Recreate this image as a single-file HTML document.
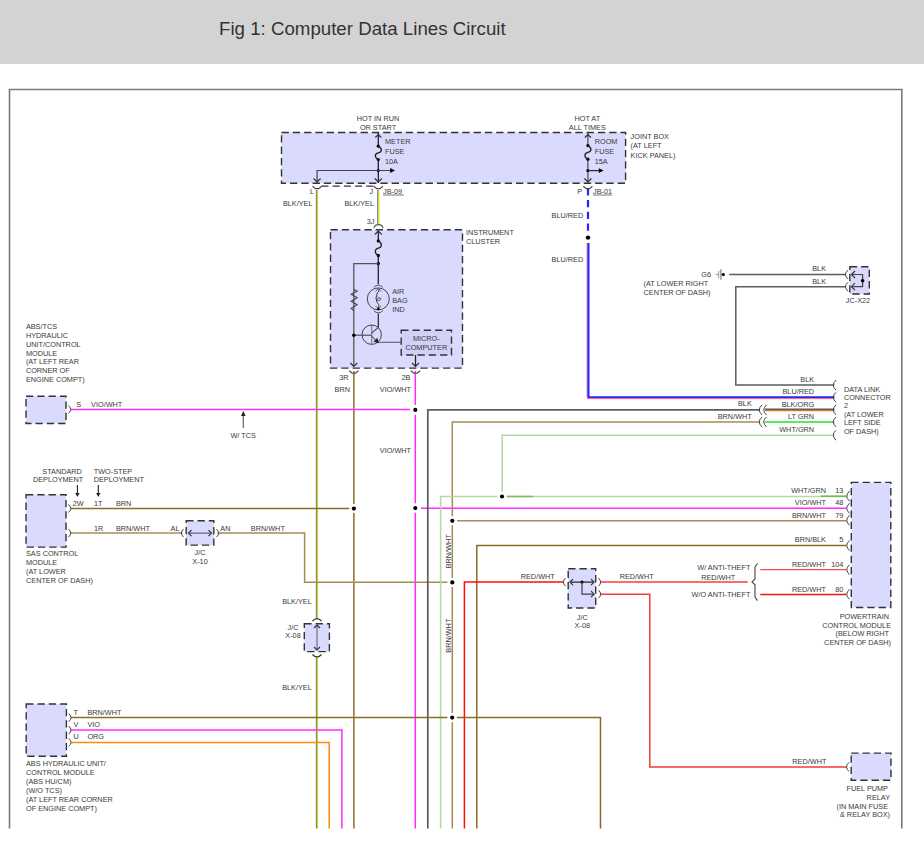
<!DOCTYPE html>
<html><head><meta charset="utf-8"><style>
html,body{margin:0;padding:0;background:#fff;width:924px;height:851px;overflow:hidden}
.hdr{position:absolute;left:0;top:0;width:924px;height:64px;background:#d3d3d3}
.ttl{position:absolute;left:219px;top:17.7px;font-family:"Liberation Sans",sans-serif;font-size:18.7px;color:#333;white-space:nowrap;line-height:22px}
svg{position:absolute;left:0;top:0}
text{font-family:"Liberation Sans",sans-serif}
</style></head><body>
<div class="hdr"></div>
<div class="ttl">Fig 1: Computer Data Lines Circuit</div>
<svg width="924" height="851" viewBox="0 0 924 851">
<path d="M9.5,828.5 L9.5,89.5 L901.8,89.5 L901.8,828.5" fill="none" stroke="#7a7a7a" stroke-width="1.6"/>
<rect x="281.5" y="132.5" width="344.1" height="50.8" fill="#dadaff" stroke="#333" stroke-width="1.4" stroke-dasharray="7.3,4"/>
<rect x="330.5" y="229.8" width="132.0" height="138.3" fill="#dadaff" stroke="#333" stroke-width="1.4" stroke-dasharray="7.3,4"/>
<rect x="401.2" y="330.3" width="50.3" height="24.7" fill="#d0d0f8" stroke="#333" stroke-width="1.4" stroke-dasharray="7.3,4"/>
<rect x="26" y="396.3" width="40.0" height="27.2" fill="#dadaff" stroke="#333" stroke-width="1.4" stroke-dasharray="7.3,4"/>
<rect x="26" y="494.8" width="40.0" height="52.3" fill="#dadaff" stroke="#333" stroke-width="1.4" stroke-dasharray="7.3,4"/>
<rect x="186.2" y="520.8" width="27.6" height="24.3" fill="#dadaff" stroke="#333" stroke-width="1.4" stroke-dasharray="7.3,4"/>
<rect x="304.3" y="623.8" width="25.1" height="27.8" fill="#dadaff" stroke="#333" stroke-width="1.4" stroke-dasharray="7.3,4"/>
<rect x="568.2" y="568.7" width="27.5" height="39.3" fill="#dadaff" stroke="#333" stroke-width="1.4" stroke-dasharray="7.3,4"/>
<rect x="849.8" y="266.7" width="19.5" height="27.3" fill="#dadaff" stroke="#333" stroke-width="1.4" stroke-dasharray="7.3,4"/>
<rect x="851.3" y="482.4" width="39.5" height="125.1" fill="#dadaff" stroke="#333" stroke-width="1.4" stroke-dasharray="7.3,4"/>
<rect x="851.2" y="753.1" width="39.8" height="27.2" fill="#dadaff" stroke="#333" stroke-width="1.4" stroke-dasharray="7.3,4"/>
<rect x="26.2" y="704" width="40.2" height="52.3" fill="#dadaff" stroke="#333" stroke-width="1.4" stroke-dasharray="7.3,4"/>
<path d="M316.4,190 L316.4,619" fill="none" stroke="#767b8a" stroke-width="1.1" stroke-linejoin="miter" />
<path d="M317.5,190 L317.5,619" fill="none" stroke="#d6d612" stroke-width="1.2" stroke-linejoin="miter" />
<path d="M316.4,656 L316.4,828.5" fill="none" stroke="#767b8a" stroke-width="1.1" stroke-linejoin="miter" />
<path d="M317.5,656 L317.5,828.5" fill="none" stroke="#d6d612" stroke-width="1.2" stroke-linejoin="miter" />
<path d="M377.7,190 L377.7,224" fill="none" stroke="#767b8a" stroke-width="1.1" stroke-linejoin="miter" />
<path d="M378.8,190 L378.8,224" fill="none" stroke="#d6d612" stroke-width="1.2" stroke-linejoin="miter" />
<path d="M353.9,371 L353.9,505" fill="none" stroke="#8a6c25" stroke-width="1.5" stroke-linejoin="miter" />
<path d="M353.9,512.5 L353.9,828.5" fill="none" stroke="#8a6c25" stroke-width="1.5" stroke-linejoin="miter" />
<path d="M415.3,371 L415.3,405" fill="none" stroke="#ff2bff" stroke-width="1.5" stroke-linejoin="miter" />
<path d="M415.3,414.5 L415.3,503.5" fill="none" stroke="#ff2bff" stroke-width="1.5" stroke-linejoin="miter" />
<path d="M415.3,512.5 L415.3,828.5" fill="none" stroke="#ff2bff" stroke-width="1.5" stroke-linejoin="miter" />
<path d="M70.7,409.6 L410,409.6" fill="none" stroke="#ff2bff" stroke-width="1.5" stroke-linejoin="miter" />
<path d="M421,508.3 L846.5,508.3" fill="none" stroke="#ff2bff" stroke-width="1.5" stroke-linejoin="miter" />
<path d="M70.8,508.5 L349.5,508.5" fill="none" stroke="#8a6c25" stroke-width="1.5" stroke-linejoin="miter" />
<path d="M70.8,533.1 L182.5,533.1" fill="none" stroke="#a58c55" stroke-width="1.5" stroke-linejoin="miter" />
<path d="M217.5,533.1 L304.6,533.1 L304.6,582.3 L447.5,582.3" fill="none" stroke="#a58c55" stroke-width="1.5" stroke-linejoin="miter" />
<path d="M427.8,828.5 L427.8,409.9 L760,409.9" fill="none" stroke="#5c5c5c" stroke-width="1.7" stroke-linejoin="miter" />
<path d="M765,409.2 L834.4,409.2" fill="none" stroke="#5c5c5c" stroke-width="1.4" stroke-linejoin="miter" />
<path d="M765,410.6 L834.4,410.6" fill="none" stroke="#e07a1a" stroke-width="1.4" stroke-linejoin="miter" />
<path d="M452.3,828.5 L452.3,722" fill="none" stroke="#a58c55" stroke-width="1.5" stroke-linejoin="miter" />
<path d="M452.3,713 L452.3,587" fill="none" stroke="#a58c55" stroke-width="1.5" stroke-linejoin="miter" />
<path d="M452.3,578 L452.3,525" fill="none" stroke="#a58c55" stroke-width="1.5" stroke-linejoin="miter" />
<path d="M452.3,516.5 L452.3,421.9 L760,421.9" fill="none" stroke="#a58c55" stroke-width="1.5" stroke-linejoin="miter" />
<path d="M765,421.9 L834.4,421.9" fill="none" stroke="#22e622" stroke-width="1.5" stroke-linejoin="miter" />
<path d="M502.2,492 L502.2,435.2 L834.4,435.2" fill="none" stroke="#b4d8a6" stroke-width="1.5" stroke-linejoin="miter" />
<path d="M440.6,828.5 L440.6,496.5 L497.5,496.5" fill="none" stroke="#b4d8a6" stroke-width="1.6" stroke-linejoin="miter" />
<path d="M506.5,496.5 L846.5,496.5" fill="none" stroke="#b4d8a6" stroke-width="1.6" stroke-linejoin="miter" />
<path d="M507,496.5 L533,496.5" fill="none" stroke="#7cc060" stroke-width="1.6" stroke-linejoin="miter" />
<path d="M821,496.2 L846.5,496.2" fill="none" stroke="#6cb850" stroke-width="1.5" stroke-linejoin="miter" />
<path d="M457,520.8 L846.5,520.8" fill="none" stroke="#a58c55" stroke-width="1.5" stroke-linejoin="miter" />
<path d="M476.8,828.5 L476.8,545.5 L846.5,545.5" fill="none" stroke="#8a6c25" stroke-width="1.5" stroke-linejoin="miter" />
<path d="M464.4,828.5 L464.4,582.1 L563.5,582.1" fill="none" stroke="#ff0c0c" stroke-width="1.5" stroke-linejoin="miter" />
<path d="M600.7,582.1 L747.8,581.9" fill="none" stroke="#ff3a3a" stroke-width="1.5" stroke-linejoin="miter" />
<path d="M600.7,594.2 L649.8,594.2 L649.8,766.9 L846.2,766.9" fill="none" stroke="#f03c3c" stroke-width="1.5" stroke-linejoin="miter" />
<path d="M760.3,569.6 L846.5,569.6" fill="none" stroke="#ff4a4a" stroke-width="1.4" stroke-linejoin="miter" />
<path d="M760.3,594.4 L846.5,594.4" fill="none" stroke="#ee1515" stroke-width="1.5" stroke-linejoin="miter" />
<path d="M71,717.6 L447.5,717.6" fill="none" stroke="#8a6c25" stroke-width="1.5" stroke-linejoin="miter" />
<path d="M456.5,717.6 L600.5,717.6 L600.5,828.5" fill="none" stroke="#8a6c25" stroke-width="1.5" stroke-linejoin="miter" />
<path d="M71,730 L341.9,730 L341.9,828.5" fill="none" stroke="#ff2bff" stroke-width="1.5" stroke-linejoin="miter" />
<path d="M71,742.4 L329.2,742.4 L329.2,828.5" fill="none" stroke="#ff8a10" stroke-width="1.5" stroke-linejoin="miter" />
<path d="M588,188.3 L588,232" fill="none" stroke="#2525ff" stroke-width="2.2" stroke-linejoin="miter" stroke-dasharray="7.3,4.4"/>
<path d="M587.2,243 L587.2,397.3" fill="none" stroke="#d04a90" stroke-width="1.0" stroke-linejoin="miter" />
<path d="M588.5,243 L588.5,397.3 L834.4,397.3" fill="none" stroke="#2525ff" stroke-width="2" stroke-linejoin="miter" />
<path d="M587,398.6 L834.4,398.6" fill="none" stroke="#ff6060" stroke-width="0.9" stroke-linejoin="miter" />
<path d="M729.2,274.5 L846,274.5" fill="none" stroke="#5c5c5c" stroke-width="1.5" stroke-linejoin="miter" />
<path d="M846,286.7 L735.8,286.7 L735.8,385.1 L834.4,385.1" fill="none" stroke="#5c5c5c" stroke-width="1.5" stroke-linejoin="miter" />
<circle cx="415.3" cy="409.9" r="4.5" fill="#fff"/>
<circle cx="415.3" cy="409.9" r="2.1" fill="#000"/>
<circle cx="353.9" cy="508.6" r="4.5" fill="#fff"/>
<circle cx="353.9" cy="508.6" r="2.1" fill="#000"/>
<circle cx="415.3" cy="508.1" r="4.5" fill="#fff"/>
<circle cx="415.3" cy="508.1" r="2.1" fill="#000"/>
<circle cx="502" cy="496.5" r="4.5" fill="#fff"/>
<circle cx="502" cy="496.5" r="2.1" fill="#000"/>
<circle cx="452.3" cy="520.8" r="4.5" fill="#fff"/>
<circle cx="452.3" cy="520.8" r="2.1" fill="#000"/>
<circle cx="452.3" cy="582.4" r="4.5" fill="#fff"/>
<circle cx="452.3" cy="582.4" r="2.1" fill="#000"/>
<circle cx="452.2" cy="717.6" r="4.5" fill="#fff"/>
<circle cx="452.2" cy="717.6" r="2.1" fill="#000"/>
<circle cx="588" cy="237.6" r="2.2" fill="#000"/>
<path d="M378.3,133 L378.3,146.2" fill="none" stroke="#222" stroke-width="1.3" stroke-linejoin="miter" />
<path d="M378.3,159.5 L378.3,183" fill="none" stroke="#222" stroke-width="1.3" stroke-linejoin="miter" />
<path d="M375.3,137.5 L378.3,134.5 L381.3,137.5" fill="none" stroke="#333" stroke-width="1.2"/>
<circle cx="378.3" cy="146.2" r="1.6" fill="#000"/>
<circle cx="378.3" cy="159.5" r="1.6" fill="#000"/>
<path d="M378.3,146.2 C382.3,148.2 382.3,151.85 378.3,152.85 C374.3,153.85 374.3,157.5 378.3,159.5" fill="none" stroke="#222" stroke-width="1.3"/>
<circle cx="378.3" cy="170.5" r="1.6" fill="#000"/>
<path d="M317.1,183 L317.1,170.5 L391,170.5" fill="none" stroke="#444" stroke-width="1.2" stroke-linejoin="miter" />
<path d="M390.2,168.1 L395,170.5 L390.2,172.9 Z" fill="#000"/>
<path d="M313.6,178.5 L317.1,182 L320.6,178.5" fill="none" stroke="#333" stroke-width="1.2"/>
<path d="M374.8,178.5 L378.3,182 L381.8,178.5" fill="none" stroke="#333" stroke-width="1.2"/>
<path d="M312.5,186.2 L315.5,188.6 L318.70000000000005,188.6 L321.70000000000005,186.2" fill="none" stroke="#444" stroke-width="1.1"/>
<path d="M373.7,186.2 L376.7,188.6 L379.90000000000003,188.6 L382.90000000000003,186.2" fill="none" stroke="#444" stroke-width="1.1"/>
<path d="M321.5,186.2 L374,186.2" fill="none" stroke="#333" stroke-width="1.2" stroke-linejoin="miter" stroke-dasharray="7,4.2"/>
<path d="M587.9,133 L587.9,145.6" fill="none" stroke="#555" stroke-width="1.3" stroke-linejoin="miter" />
<path d="M587.9,159.2 L587.9,183" fill="none" stroke="#555" stroke-width="1.3" stroke-linejoin="miter" />
<path d="M584.9,137.5 L587.9,134.5 L590.9,137.5" fill="none" stroke="#333" stroke-width="1.2"/>
<circle cx="587.9" cy="145.6" r="1.6" fill="#000"/>
<circle cx="587.9" cy="159.2" r="1.6" fill="#000"/>
<path d="M587.9,145.6 C591.9,147.6 591.9,151.39999999999998 587.9,152.39999999999998 C583.9,153.39999999999998 583.9,157.2 587.9,159.2" fill="none" stroke="#222" stroke-width="1.3"/>
<circle cx="587.9" cy="170.6" r="1.6" fill="#000"/>
<path d="M587.9,170.6 L600,170.6" fill="none" stroke="#333" stroke-width="1.3" stroke-linejoin="miter" />
<path d="M598.8000000000001,168.2 L603.6,170.6 L598.8000000000001,173.0 Z" fill="#000"/>
<path d="M584.4,178.5 L587.9,182 L591.4,178.5" fill="none" stroke="#333" stroke-width="1.2"/>
<path d="M583.3,186.2 L586.3,188.6 L589.5,188.6 L592.5,186.2" fill="none" stroke="#444" stroke-width="1.1"/>
<path d="M374,228.3 Q374.5,224.6 378.5,224.6 Q382.5,224.6 383,228.3" fill="none" stroke="#555" stroke-width="1.1"/>
<path d="M374.8,234.5 L378.3,231 L381.8,234.5" fill="none" stroke="#333" stroke-width="1.2"/>
<path d="M378.3,231 L378.3,240.9" fill="none" stroke="#222" stroke-width="1.3" stroke-linejoin="miter" />
<path d="M378.3,255.4 L378.3,263.6" fill="none" stroke="#222" stroke-width="1.3" stroke-linejoin="miter" />
<circle cx="378.3" cy="240.9" r="1.6" fill="#000"/>
<circle cx="378.3" cy="255.4" r="1.6" fill="#000"/>
<path d="M378.3,240.9 C382.3,242.9 382.3,247.15 378.3,248.15 C374.3,249.15 374.3,253.4 378.3,255.4" fill="none" stroke="#222" stroke-width="1.3"/>
<circle cx="378.3" cy="263.6" r="1.7" fill="#000"/>
<path d="M378.3,263.6 L353.8,263.6 L353.8,366" fill="none" stroke="#555" stroke-width="1.3" stroke-linejoin="miter" />
<path d="M353.9,289.5 L357.2,291.3 L351.2,294.3 L357.2,297.8 L351.2,301.2 L357.2,304.8 L351.2,308.3 L353.9,310.9" fill="none" stroke="#444" stroke-width="1.1"/>
<path d="M378.3,263.6 L378.3,284.3" fill="none" stroke="#222" stroke-width="1.3" stroke-linejoin="miter" />
<path d="M373.8,287.3 Q378.3,283 382.8,287.3" fill="none" stroke="#555" stroke-width="1"/>
<circle cx="378.3" cy="298.9" r="11" fill="none" stroke="#444" stroke-width="1"/>
<path d="M375.5,291.40000000000003 L378.3,288.6 L381.1,291.40000000000003" fill="none" stroke="#555" stroke-width="0.9"/>
<path d="M375.5,305.8 L378.3,308.6 L381.1,305.8" fill="none" stroke="#555" stroke-width="0.9"/>
<path d="M378.3,288.6 C381,291 375.5,293 377,296 C374,299 378,302 380.5,299.5 C382,297.5 377,297 376.5,299.8 C376,303 380.5,304 378.3,308.6" fill="none" stroke="#333" stroke-width="1"/>
<circle cx="378.3" cy="309" r="1.3" fill="#000"/>
<path d="M373.8,310.8 Q378.3,315 382.8,310.8" fill="none" stroke="#555" stroke-width="1"/>
<path d="M378.3,313.5 L378.3,327.6" fill="none" stroke="#222" stroke-width="1.2" stroke-linejoin="miter" />
<circle cx="371.7" cy="334.7" r="9.7" fill="none" stroke="#444" stroke-width="1"/>
<path d="M353.8,335.2 L371.7,335.2" fill="none" stroke="#444" stroke-width="1.1" stroke-linejoin="miter" />
<path d="M371.7,324.5 L371.7,344.6" fill="none" stroke="#777" stroke-width="1.1" stroke-linejoin="miter" />
<path d="M371.7,333.2 L378.3,327.4" fill="none" stroke="#444" stroke-width="1.1" stroke-linejoin="miter" />
<path d="M371.7,336 L377.5,342.3 L401.2,342.3" fill="none" stroke="#555" stroke-width="1.1" stroke-linejoin="miter" />
<path d="M379,343.2 L373.6,341.8 L377.2,337.8 Z" fill="#222"/>
<circle cx="353.8" cy="335.2" r="1.7" fill="#000"/>
<path d="M350.3,363.0 L353.8,366.5 L357.3,363.0" fill="none" stroke="#333" stroke-width="1.2"/>
<path d="M349.2,370.8 L352.2,373.2 L355.40000000000003,373.2 L358.40000000000003,370.8" fill="none" stroke="#444" stroke-width="1.1"/>
<path d="M415.5,355 L415.5,366" fill="none" stroke="#222" stroke-width="1.3" stroke-linejoin="miter" />
<path d="M412.0,363.0 L415.5,366.5 L419.0,363.0" fill="none" stroke="#333" stroke-width="1.2"/>
<path d="M410.9,370.8 L413.9,373.2 L417.1,373.2 L420.1,370.8" fill="none" stroke="#444" stroke-width="1.1"/>
<path d="M68.5,405.5 Q72.9,409.5 68.5,413.5" fill="none" stroke="#444" stroke-width="1.0"/>
<path d="M68.5,504.5 Q72.9,508.5 68.5,512.5" fill="none" stroke="#444" stroke-width="1.0"/>
<path d="M68.5,529.1 Q72.9,533.1 68.5,537.1" fill="none" stroke="#444" stroke-width="1.0"/>
<path d="M68.8,713.6 Q73.2,717.6 68.8,721.6" fill="none" stroke="#444" stroke-width="1.0"/>
<path d="M68.8,726 Q73.2,730 68.8,734" fill="none" stroke="#444" stroke-width="1.0"/>
<path d="M68.8,738.4 Q73.2,742.4 68.8,746.4" fill="none" stroke="#444" stroke-width="1.0"/>
<path d="M183.5,529.1 Q179.1,533.1 183.5,537.1" fill="none" stroke="#444" stroke-width="1.0"/>
<path d="M216.5,529.1 Q220.9,533.1 216.5,537.1" fill="none" stroke="#444" stroke-width="1.0"/>
<path d="M191.5,530.1 L188.5,533.1 L191.5,536.1" fill="none" stroke="#333" stroke-width="1.2"/>
<path d="M208.5,530.1 L211.5,533.1 L208.5,536.1" fill="none" stroke="#333" stroke-width="1.2"/>
<path d="M188.5,533.1 L211.5,533.1" fill="none" stroke="#555" stroke-width="1.1" stroke-linejoin="miter" />
<path d="M312.5,621 Q317,616.05 321.5,621" fill="none" stroke="#333" stroke-width="1.2"/>
<path d="M312.5,654.5 Q317,659.45 321.5,654.5" fill="none" stroke="#333" stroke-width="1.2"/>
<path d="M317,625 L317,650" fill="none" stroke="#666" stroke-width="1.1" stroke-linejoin="miter" />
<path d="M314,628 L317,625 L320,628" fill="none" stroke="#333" stroke-width="1.2"/>
<path d="M314,647 L317,650 L320,647" fill="none" stroke="#333" stroke-width="1.2"/>
<path d="M565.5,578.1 Q561.1,582.1 565.5,586.1" fill="none" stroke="#444" stroke-width="1.0"/>
<path d="M598.5,578.1 Q602.9,582.1 598.5,586.1" fill="none" stroke="#444" stroke-width="1.0"/>
<path d="M598.5,590.2 Q602.9,594.2 598.5,598.2" fill="none" stroke="#444" stroke-width="1.0"/>
<path d="M570,582.1 L594,582.1" fill="none" stroke="#222" stroke-width="1.2" stroke-linejoin="miter" />
<path d="M573,579.1 L570,582.1 L573,585.1" fill="none" stroke="#333" stroke-width="1.2"/>
<path d="M591,579.1 L594,582.1 L591,585.1" fill="none" stroke="#333" stroke-width="1.2"/>
<circle cx="582" cy="582.1" r="1.6" fill="#000"/>
<path d="M582,582.1 L582,594.2 L594,594.2" fill="none" stroke="#444" stroke-width="1.2" stroke-linejoin="miter" />
<path d="M591,591.2 L594,594.2 L591,597.2" fill="none" stroke="#333" stroke-width="1.2"/>
<path d="M848,270.0 Q843.05,274.5 848,279.0" fill="none" stroke="#444" stroke-width="1.0"/>
<path d="M848,282.2 Q843.05,286.7 848,291.2" fill="none" stroke="#444" stroke-width="1.0"/>
<path d="M855.0,271.0 L851.5,274.5 L855.0,278.0" fill="none" stroke="#333" stroke-width="1.2"/>
<path d="M855.0,283.2 L851.5,286.7 L855.0,290.2" fill="none" stroke="#333" stroke-width="1.2"/>
<path d="M851.5,274.5 L862.6,274.5 L862.6,286.7 L851.5,286.7" fill="none" stroke="#444" stroke-width="1.2" stroke-linejoin="miter" />
<circle cx="862.6" cy="280.8" r="1.8" fill="#000"/>
<path d="M715.5,274.5 L719,274.5" fill="none" stroke="#999" stroke-width="1.0" stroke-linejoin="miter" />
<path d="M718.6,271 L718.6,278" fill="none" stroke="#aaa" stroke-width="1.3" stroke-linejoin="miter" />
<path d="M720.9,269.2 L720.9,279.8" fill="none" stroke="#999" stroke-width="1.5" stroke-linejoin="miter" />
<circle cx="723.3" cy="274.5" r="1.6" fill="#000"/>
<path d="M836,380.1 Q830.5,385.1 836,390.1" fill="none" stroke="#444" stroke-width="1.0"/>
<path d="M836,392.3 Q830.5,397.3 836,402.3" fill="none" stroke="#444" stroke-width="1.0"/>
<path d="M836,404.9 Q830.5,409.9 836,414.9" fill="none" stroke="#444" stroke-width="1.0"/>
<path d="M836,416.9 Q830.5,421.9 836,426.9" fill="none" stroke="#444" stroke-width="1.0"/>
<path d="M836,430.2 Q830.5,435.2 836,440.2" fill="none" stroke="#444" stroke-width="1.0"/>
<path d="M762,404.9 Q756.5,409.9 762,414.9" fill="none" stroke="#444" stroke-width="1.0"/>
<path d="M766.5,404.9 Q761.0,409.9 766.5,414.9" fill="none" stroke="#444" stroke-width="1.0"/>
<path d="M762,416.9 Q756.5,421.9 762,426.9" fill="none" stroke="#444" stroke-width="1.0"/>
<path d="M766.5,416.9 Q761.0,421.9 766.5,426.9" fill="none" stroke="#444" stroke-width="1.0"/>
<path d="M849.5,491.1 Q844.0,496.1 849.5,501.1" fill="none" stroke="#444" stroke-width="1.0"/>
<path d="M849.5,503.3 Q844.0,508.3 849.5,513.3" fill="none" stroke="#444" stroke-width="1.0"/>
<path d="M849.5,515.3 Q844.0,520.3 849.5,525.3" fill="none" stroke="#444" stroke-width="1.0"/>
<path d="M849.5,540.5 Q844.0,545.5 849.5,550.5" fill="none" stroke="#444" stroke-width="1.0"/>
<path d="M849.5,564.7 Q844.0,569.7 849.5,574.7" fill="none" stroke="#444" stroke-width="1.0"/>
<path d="M849.5,589.3 Q844.0,594.3 849.5,599.3" fill="none" stroke="#444" stroke-width="1.0"/>
<path d="M849,762.4 Q844.05,766.9 849,771.4" fill="none" stroke="#444" stroke-width="1.0"/>
<path d="M757.5,563.5 L755,567 L755,579 L752,581.9 L755,584.8 L755,597 L757.5,600.6" fill="none" stroke="#444" stroke-width="1.1"/>
<path d="M243.3,428 L243.3,414" fill="none" stroke="#555" stroke-width="1.1" stroke-linejoin="miter" />
<path d="M241,416 L243.3,411 L245.6,416 Z" fill="#222"/>
<path d="M77.4,485 L77.4,494" fill="none" stroke="#222" stroke-width="1.1" stroke-linejoin="miter" />
<path d="M75.2,493 L77.4,497 L79.6,493 Z" fill="#222"/>
<path d="M98.3,485 L98.3,494" fill="none" stroke="#222" stroke-width="1.1" stroke-linejoin="miter" />
<path d="M96.1,493 L98.3,497 L100.5,493 Z" fill="#222"/>
<text x="378" y="121.0" text-anchor="middle" font-size="7.3" fill="#3a3a3a">HOT IN RUN</text>
<text x="378" y="129.7" text-anchor="middle" font-size="7.3" fill="#3a3a3a">OR START</text>
<text x="385" y="144.0" text-anchor="start" font-size="7.3" fill="#3a3a3a">METER</text>
<text x="385" y="153.9" text-anchor="start" font-size="7.3" fill="#3a3a3a">FUSE</text>
<text x="385" y="163.8" text-anchor="start" font-size="7.3" fill="#3a3a3a">10A</text>
<text x="587.3" y="121.0" text-anchor="middle" font-size="7.3" fill="#3a3a3a">HOT AT</text>
<text x="587.3" y="129.7" text-anchor="middle" font-size="7.3" fill="#3a3a3a">ALL TIMES</text>
<text x="594.7" y="144.2" text-anchor="start" font-size="7.3" fill="#3a3a3a">ROOM</text>
<text x="594.7" y="154.2" text-anchor="start" font-size="7.3" fill="#3a3a3a">FUSE</text>
<text x="594.7" y="164.2" text-anchor="start" font-size="7.3" fill="#3a3a3a">15A</text>
<text x="630.6" y="138.8" text-anchor="start" font-size="7.3" fill="#3a3a3a">JOINT BOX</text>
<text x="630.6" y="148.4" text-anchor="start" font-size="7.3" fill="#3a3a3a">(AT LEFT</text>
<text x="630.6" y="158.0" text-anchor="start" font-size="7.3" fill="#3a3a3a">KICK PANEL)</text>
<text x="314" y="193.5" text-anchor="end" font-size="7.3" fill="#3a3a3a">L</text>
<text x="373.2" y="193.5" text-anchor="end" font-size="7.3" fill="#3a3a3a">J</text>
<text x="383" y="193.5" text-anchor="start" font-size="7.3" fill="#3a3a3a">JB-09</text>
<path d="M383,195 L404,195" fill="none" stroke="#555" stroke-width="0.8" stroke-linejoin="miter" />
<text x="582" y="193.5" text-anchor="end" font-size="7.3" fill="#3a3a3a">P</text>
<text x="593" y="193.5" text-anchor="start" font-size="7.3" fill="#3a3a3a">JB-01</text>
<path d="M593,195 L612,195" fill="none" stroke="#555" stroke-width="0.8" stroke-linejoin="miter" />
<text x="312.5" y="206.2" text-anchor="end" font-size="7.3" fill="#3a3a3a">BLK/YEL</text>
<text x="374" y="206.2" text-anchor="end" font-size="7.3" fill="#3a3a3a">BLK/YEL</text>
<text x="374.5" y="223.6" text-anchor="end" font-size="7.3" fill="#3a3a3a">3J</text>
<text x="466" y="235.0" text-anchor="start" font-size="7.3" fill="#3a3a3a">INSTRUMENT</text>
<text x="466" y="244.2" text-anchor="start" font-size="7.3" fill="#3a3a3a">CLUSTER</text>
<text x="392.2" y="293.8" text-anchor="start" font-size="7.3" fill="#3a3a3a">AIR</text>
<text x="392.2" y="302.8" text-anchor="start" font-size="7.3" fill="#3a3a3a">BAG</text>
<text x="392.2" y="311.8" text-anchor="start" font-size="7.3" fill="#3a3a3a">IND</text>
<text x="426.3" y="340.9" text-anchor="middle" font-size="7.3" fill="#3a3a3a">MICRO-</text>
<text x="426.3" y="349.8" text-anchor="middle" font-size="7.3" fill="#3a3a3a">COMPUTER</text>
<text x="348.5" y="380.3" text-anchor="end" font-size="7.3" fill="#3a3a3a">3R</text>
<text x="410.5" y="380.3" text-anchor="end" font-size="7.3" fill="#3a3a3a">2B</text>
<text x="350" y="391.5" text-anchor="end" font-size="7.3" fill="#3a3a3a">BRN</text>
<text x="411" y="391.5" text-anchor="end" font-size="7.3" fill="#3a3a3a">VIO/WHT</text>
<text x="411" y="452.5" text-anchor="end" font-size="7.3" fill="#3a3a3a">VIO/WHT</text>
<text x="583.2" y="218.2" text-anchor="end" font-size="7.3" fill="#3a3a3a">BLU/RED</text>
<text x="583.2" y="261.6" text-anchor="end" font-size="7.3" fill="#3a3a3a">BLU/RED</text>
<text x="25.9" y="328.8" text-anchor="start" font-size="7.3" fill="#3a3a3a">ABS/TCS</text>
<text x="25.9" y="337.7" text-anchor="start" font-size="7.3" fill="#3a3a3a">HYDRAULIC</text>
<text x="25.9" y="346.6" text-anchor="start" font-size="7.3" fill="#3a3a3a">UNIT/CONTROL</text>
<text x="25.9" y="355.5" text-anchor="start" font-size="7.3" fill="#3a3a3a">MODULE</text>
<text x="25.9" y="364.4" text-anchor="start" font-size="7.3" fill="#3a3a3a">(AT LEFT REAR</text>
<text x="25.9" y="373.3" text-anchor="start" font-size="7.3" fill="#3a3a3a">CORNER OF</text>
<text x="25.9" y="382.2" text-anchor="start" font-size="7.3" fill="#3a3a3a">ENGINE COMPT)</text>
<text x="76.3" y="407.3" text-anchor="start" font-size="7.3" fill="#3a3a3a">S</text>
<text x="91.1" y="407.3" text-anchor="start" font-size="7.3" fill="#3a3a3a">VIO/WHT</text>
<text x="243.2" y="437.9" text-anchor="middle" font-size="7.3" fill="#3a3a3a">W/ TCS</text>
<text x="42.3" y="473.8" text-anchor="start" font-size="7.3" fill="#3a3a3a">STANDARD</text>
<text x="32.9" y="481.9" text-anchor="start" font-size="7.3" fill="#3a3a3a">DEPLOYMENT</text>
<text x="93.7" y="473.8" text-anchor="start" font-size="7.3" fill="#3a3a3a">TWO-STEP</text>
<text x="93.7" y="481.9" text-anchor="start" font-size="7.3" fill="#3a3a3a">DEPLOYMENT</text>
<text x="72.8" y="505.9" text-anchor="start" font-size="7.3" fill="#3a3a3a">2W</text>
<text x="94" y="505.9" text-anchor="start" font-size="7.3" fill="#3a3a3a">1T</text>
<text x="115.9" y="505.9" text-anchor="start" font-size="7.3" fill="#3a3a3a">BRN</text>
<text x="94" y="531" text-anchor="start" font-size="7.3" fill="#3a3a3a">1R</text>
<text x="115.9" y="531" text-anchor="start" font-size="7.3" fill="#3a3a3a">BRN/WHT</text>
<text x="26" y="555.8" text-anchor="start" font-size="7.3" fill="#3a3a3a">SAS CONTROL</text>
<text x="26" y="564.7" text-anchor="start" font-size="7.3" fill="#3a3a3a">MODULE</text>
<text x="26" y="573.6" text-anchor="start" font-size="7.3" fill="#3a3a3a">(AT LOWER</text>
<text x="26" y="582.5" text-anchor="start" font-size="7.3" fill="#3a3a3a">CENTER OF DASH)</text>
<text x="179.5" y="531.2" text-anchor="end" font-size="7.3" fill="#3a3a3a">AL</text>
<text x="220.3" y="531.2" text-anchor="start" font-size="7.3" fill="#3a3a3a">AN</text>
<text x="250.8" y="531.2" text-anchor="start" font-size="7.3" fill="#3a3a3a">BRN/WHT</text>
<text x="200" y="554.8" text-anchor="middle" font-size="7.3" fill="#3a3a3a">J/C</text>
<text x="200" y="563.5" text-anchor="middle" font-size="7.3" fill="#3a3a3a">X-10</text>
<text x="311.8" y="603.6" text-anchor="end" font-size="7.3" fill="#3a3a3a">BLK/YEL</text>
<text x="293" y="629.5" text-anchor="middle" font-size="7.3" fill="#3a3a3a">J/C</text>
<text x="293" y="638.4" text-anchor="middle" font-size="7.3" fill="#3a3a3a">X-08</text>
<text x="311.8" y="690" text-anchor="end" font-size="7.3" fill="#3a3a3a">BLK/YEL</text>
<text x="73.4" y="714.7" text-anchor="start" font-size="7.3" fill="#3a3a3a">T</text>
<text x="73.4" y="726.5" text-anchor="start" font-size="7.3" fill="#3a3a3a">V</text>
<text x="73.4" y="738.6" text-anchor="start" font-size="7.3" fill="#3a3a3a">U</text>
<text x="87.4" y="714.7" text-anchor="start" font-size="7.3" fill="#3a3a3a">BRN/WHT</text>
<text x="87.4" y="727" text-anchor="start" font-size="7.3" fill="#3a3a3a">VIO</text>
<text x="87.4" y="739.4" text-anchor="start" font-size="7.3" fill="#3a3a3a">ORG</text>
<text x="26" y="765.7" text-anchor="start" font-size="7.3" fill="#3a3a3a">ABS HYDRAULIC UNIT/</text>
<text x="26" y="774.8" text-anchor="start" font-size="7.3" fill="#3a3a3a">CONTROL MODULE</text>
<text x="26" y="783.8" text-anchor="start" font-size="7.3" fill="#3a3a3a">(ABS HU/CM)</text>
<text x="26" y="792.9" text-anchor="start" font-size="7.3" fill="#3a3a3a">(W/O TCS)</text>
<text x="26" y="801.9" text-anchor="start" font-size="7.3" fill="#3a3a3a">(AT LEFT REAR CORNER</text>
<text x="26" y="811.0" text-anchor="start" font-size="7.3" fill="#3a3a3a">OF ENGINE COMPT)</text>
<text x="554.8" y="579.3" text-anchor="end" font-size="7.3" fill="#3a3a3a">RED/WHT</text>
<text x="619.7" y="579.3" text-anchor="start" font-size="7.3" fill="#3a3a3a">RED/WHT</text>
<text x="582.3" y="619.5" text-anchor="middle" font-size="7.3" fill="#3a3a3a">J/C</text>
<text x="582.3" y="627.7" text-anchor="middle" font-size="7.3" fill="#3a3a3a">X-08</text>
<text x="750.4" y="569.9" text-anchor="end" font-size="7.3" fill="#3a3a3a">W/ ANTI-THEFT</text>
<text x="735.2" y="579.6" text-anchor="end" font-size="7.3" fill="#3a3a3a">RED/WHT</text>
<text x="750.4" y="596.8" text-anchor="end" font-size="7.3" fill="#3a3a3a">W/O ANTI-THEFT</text>
<text x="826" y="492.5" text-anchor="end" font-size="7.3" fill="#3a3a3a">WHT/GRN</text>
<text x="843.4" y="492.5" text-anchor="end" font-size="7.3" fill="#3a3a3a">13</text>
<text x="826" y="504.8" text-anchor="end" font-size="7.3" fill="#3a3a3a">VIO/WHT</text>
<text x="843.4" y="504.8" text-anchor="end" font-size="7.3" fill="#3a3a3a">48</text>
<text x="826" y="517.8" text-anchor="end" font-size="7.3" fill="#3a3a3a">BRN/WHT</text>
<text x="843.4" y="517.8" text-anchor="end" font-size="7.3" fill="#3a3a3a">79</text>
<text x="826" y="542" text-anchor="end" font-size="7.3" fill="#3a3a3a">BRN/BLK</text>
<text x="843.4" y="542" text-anchor="end" font-size="7.3" fill="#3a3a3a">5</text>
<text x="826" y="567" text-anchor="end" font-size="7.3" fill="#3a3a3a">RED/WHT</text>
<text x="843.4" y="567" text-anchor="end" font-size="7.3" fill="#3a3a3a">104</text>
<text x="826" y="591.8" text-anchor="end" font-size="7.3" fill="#3a3a3a">RED/WHT</text>
<text x="843.4" y="591.8" text-anchor="end" font-size="7.3" fill="#3a3a3a">80</text>
<text x="889" y="619.1" text-anchor="end" font-size="7.3" fill="#3a3a3a">POWERTRAIN</text>
<text x="891" y="627.9" text-anchor="end" font-size="7.3" fill="#3a3a3a">CONTROL MODULE</text>
<text x="889" y="636" text-anchor="end" font-size="7.3" fill="#3a3a3a">(BELOW RIGHT</text>
<text x="891" y="644.7" text-anchor="end" font-size="7.3" fill="#3a3a3a">CENTER OF DASH)</text>
<text x="814.1" y="381.6" text-anchor="end" font-size="7.3" fill="#3a3a3a">BLK</text>
<text x="814.1" y="394" text-anchor="end" font-size="7.3" fill="#3a3a3a">BLU/RED</text>
<text x="814.1" y="406.5" text-anchor="end" font-size="7.3" fill="#3a3a3a">BLK/ORG</text>
<text x="814.1" y="418.6" text-anchor="end" font-size="7.3" fill="#3a3a3a">LT GRN</text>
<text x="814.1" y="431.8" text-anchor="end" font-size="7.3" fill="#3a3a3a">WHT/GRN</text>
<text x="751.8" y="406.4" text-anchor="end" font-size="7.3" fill="#3a3a3a">BLK</text>
<text x="751.8" y="418.5" text-anchor="end" font-size="7.3" fill="#3a3a3a">BRN/WHT</text>
<text x="843.9" y="391.6" text-anchor="start" font-size="7.3" fill="#3a3a3a">DATA LINK</text>
<text x="843.9" y="399.8" text-anchor="start" font-size="7.3" fill="#3a3a3a">CONNECTOR</text>
<text x="843.9" y="407.7" text-anchor="start" font-size="7.3" fill="#3a3a3a">2</text>
<text x="843.9" y="416.9" text-anchor="start" font-size="7.3" fill="#3a3a3a">(AT LOWER</text>
<text x="843.9" y="425.4" text-anchor="start" font-size="7.3" fill="#3a3a3a">LEFT SIDE</text>
<text x="843.9" y="434" text-anchor="start" font-size="7.3" fill="#3a3a3a">OF DASH)</text>
<text x="711.1" y="276.6" text-anchor="end" font-size="7.3" fill="#3a3a3a">G6</text>
<text x="643.6" y="286.0" text-anchor="start" font-size="7.3" fill="#3a3a3a">(AT LOWER RIGHT</text>
<text x="643.6" y="294.9" text-anchor="start" font-size="7.3" fill="#3a3a3a">CENTER OF DASH)</text>
<text x="826" y="270.7" text-anchor="end" font-size="7.3" fill="#3a3a3a">BLK</text>
<text x="826" y="283.7" text-anchor="end" font-size="7.3" fill="#3a3a3a">BLK</text>
<text x="858" y="302.6" text-anchor="middle" font-size="7.3" fill="#3a3a3a">JC-X22</text>
<text transform="translate(450.5,568.3) rotate(-90)" font-size="7.3" fill="#3a3a3a">BRN/WHT</text>
<text transform="translate(450.5,652.7) rotate(-90)" font-size="7.3" fill="#3a3a3a">BRN/WHT</text>
<text x="826.4" y="764.3" text-anchor="end" font-size="7.3" fill="#3a3a3a">RED/WHT</text>
<text x="888" y="791.1" text-anchor="end" font-size="7.3" fill="#3a3a3a">FUEL PUMP</text>
<text x="890" y="799.9" text-anchor="end" font-size="7.3" fill="#3a3a3a">RELAY</text>
<text x="888" y="808.7" text-anchor="end" font-size="7.3" fill="#3a3a3a">(IN MAIN FUSE</text>
<text x="890" y="817.4" text-anchor="end" font-size="7.3" fill="#3a3a3a">&amp; RELAY BOX)</text>
</svg>
</body></html>
